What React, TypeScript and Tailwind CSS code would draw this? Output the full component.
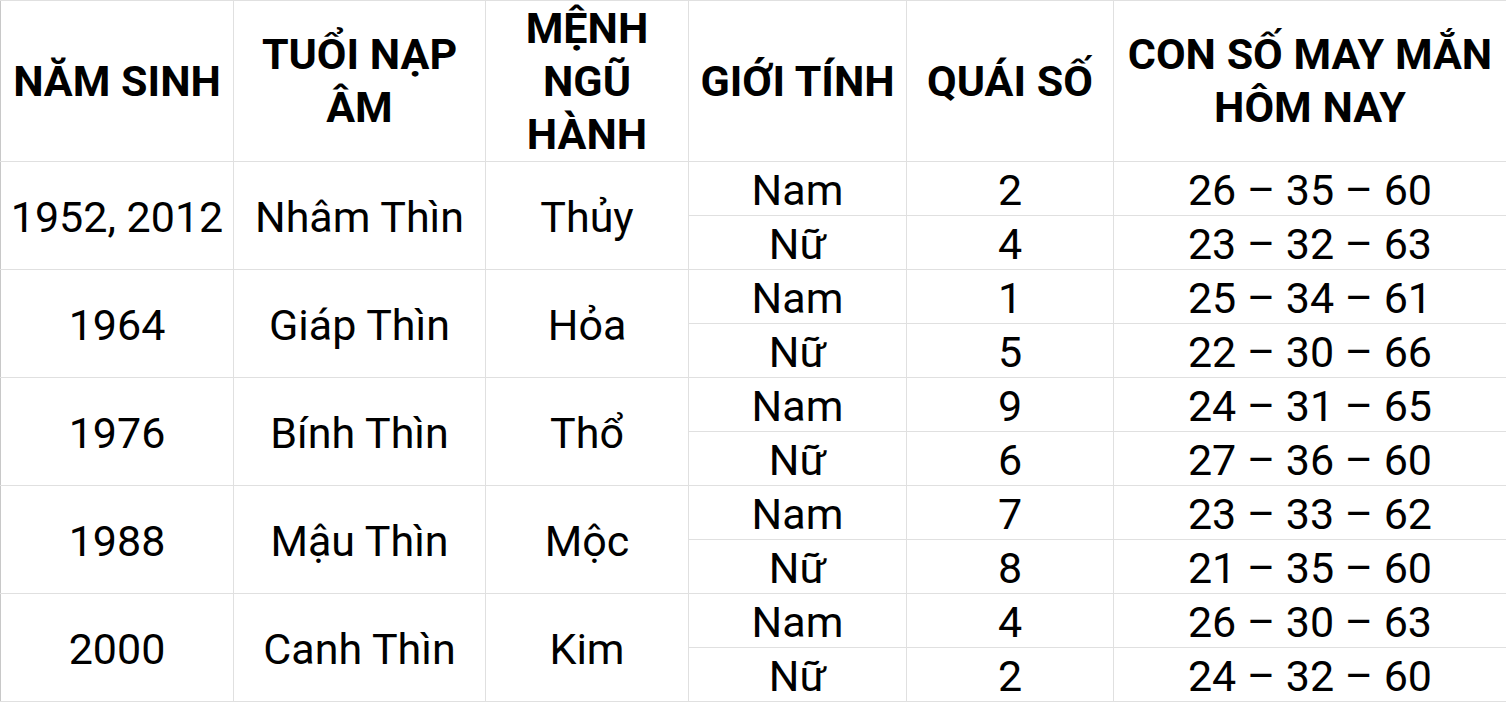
const rows = [
  { year: "1952, 2012", age: "Nhâm Thìn", element: "Thủy", items: [["Nam", "2", "26 – 35 – 60"], ["Nữ", "4", "23 – 32 – 63"]] },
  { year: "1964", age: "Giáp Thìn", element: "Hỏa", items: [["Nam", "1", "25 – 34 – 61"], ["Nữ", "5", "22 – 30 – 66"]] },
  { year: "1976", age: "Bính Thìn", element: "Thổ", items: [["Nam", "9", "24 – 31 – 65"], ["Nữ", "6", "27 – 36 – 60"]] },
  { year: "1988", age: "Mậu Thìn", element: "Mộc", items: [["Nam", "7", "23 – 33 – 62"], ["Nữ", "8", "21 – 35 – 60"]] },
  { year: "2000", age: "Canh Thìn", element: "Kim", items: [["Nam", "4", "26 – 30 – 63"], ["Nữ", "2", "24 – 32 – 60"]] },
];

const th = "border border-[#e0e0e0] p-0 text-center align-middle font-bold leading-[53px]";
const td = "border border-[#e0e0e0] p-0 pt-[2px] text-center align-middle font-normal leading-[50px]";

export default function App() {
  return (
    <div className="w-[1506px] h-[703px] overflow-hidden bg-white text-black font-['Roboto',sans-serif] text-[43px]">
      <table className="w-[1506px] table-fixed border-collapse">
        <colgroup>
          <col className="w-[233px]" />
          <col className="w-[252px]" />
          <col className="w-[203px]" />
          <col className="w-[218px]" />
          <col className="w-[207px]" />
          <col className="w-[393px]" />
        </colgroup>
        <thead>
          <tr className="h-[161px]">
            <th className={th + " border-l-[#c8c8c8]"}>NĂM SINH</th>
            <th className={th}>TUỔI NẠP<br />ÂM</th>
            <th className={th}>MỆNH<br />NGŨ<br />HÀNH</th>
            <th className={th}>GIỚI TÍNH</th>
            <th className={th}>QUÁI SỐ</th>
            <th className={th}>CON SỐ MAY MẮN<br />HÔM NAY</th>
          </tr>
        </thead>
        <tbody>
          {rows.map((r) =>
            r.items.map((it, i) => (
              <tr key={r.year + i} className="h-[54px]">
                {i === 0 && (
                  <>
                    <td rowSpan={2} className={td + " border-l-[#c8c8c8]"}>{r.year}</td>
                    <td rowSpan={2} className={td}>{r.age}</td>
                    <td rowSpan={2} className={td}>{r.element}</td>
                  </>
                )}
                <td className={td}>{it[0]}</td>
                <td className={td}>{it[1]}</td>
                <td className={td}>{it[2]}</td>
              </tr>
            ))
          )}
        </tbody>
      </table>
    </div>
  );
}
